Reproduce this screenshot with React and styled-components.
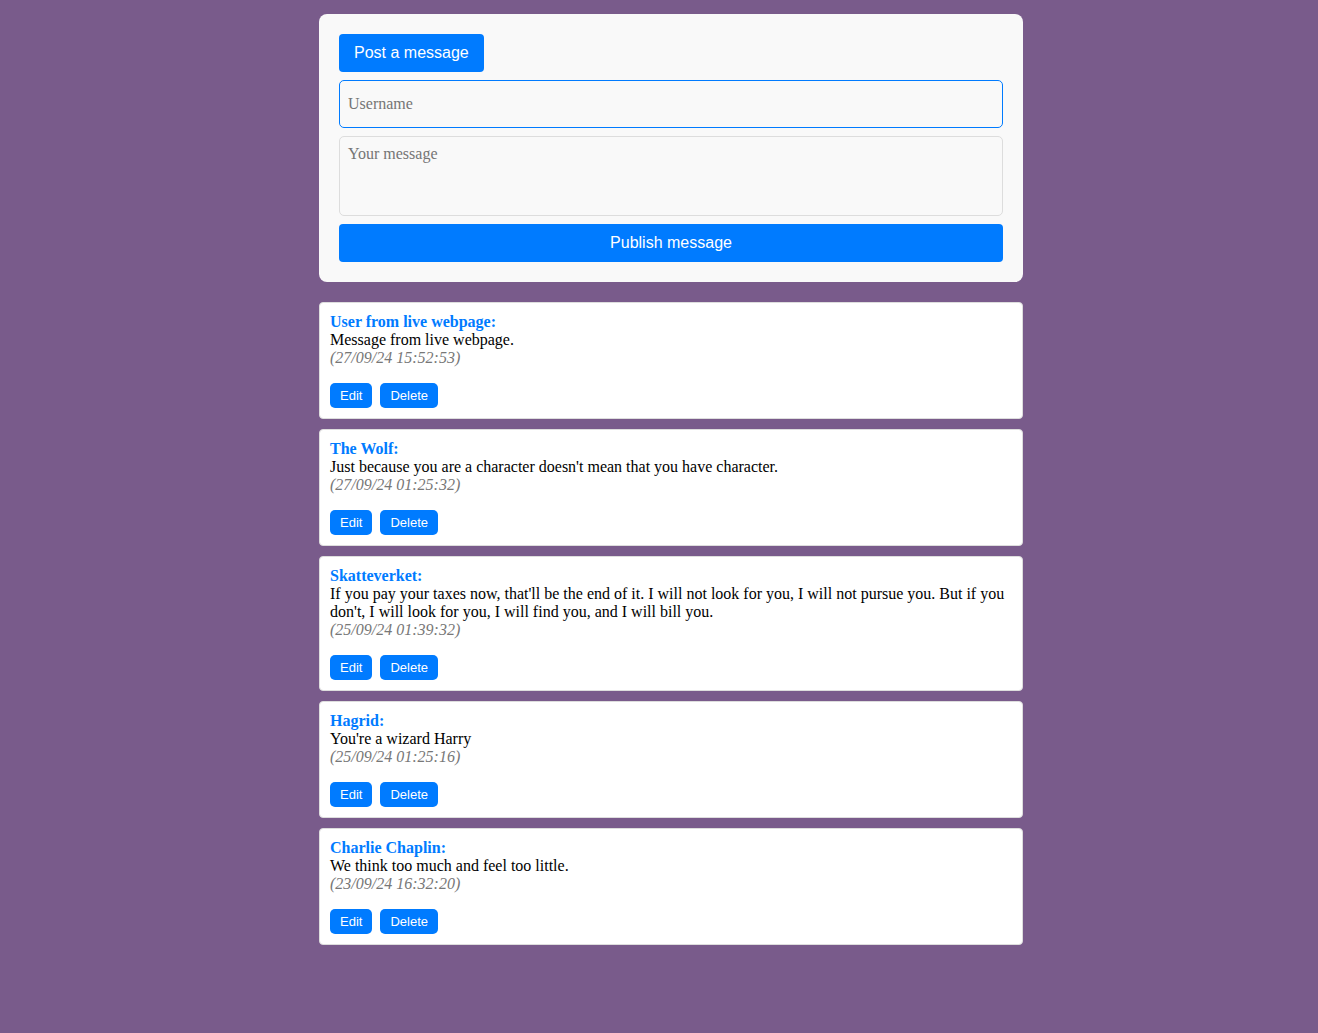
import React from "react";
import styled, { createGlobalStyle } from "styled-components";

const GlobalStyle = createGlobalStyle`
   * { box-sizing: border-box; }
   html, body {
      margin: 0;
      background: #795b8b;
      font-family: "Liberation Serif", "Times New Roman", serif;
      font-size: 16px;
   }
`;

const Page = styled.div`
   min-height: 100vh;
   padding: 14px 0 40px 24px;
`;

const Column = styled.div`
   width: 704px;
   margin: 0 auto;
   display: flex;
   flex-direction: column;
   gap: 10px;
`;

const FormCard = styled.form`
   background: #f9f9f9;
   border-radius: 8px;
   padding: 20px;
   display: flex;
   flex-direction: column;
   align-items: flex-start;
   gap: 8px;
   margin-bottom: 10px;
`;

const BlueButton = styled.button`
   background: #007bff;
   color: #fff;
   border: none;
   border-radius: ${props => (props.small ? "5px" : "4px")};
   font-family: "Liberation Sans", Arial, sans-serif;
   font-size: ${props => (props.small ? "13px" : "16px")};
   line-height: ${props => (props.small ? "15px" : "18px")};
   padding: ${props => (props.small ? "5px 10px" : "10px 15px")};
   width: ${props => (props.full ? "100%" : "auto")};
   cursor: pointer;
`;

const Field = styled.input`
   width: 100%;
   height: 48px;
   padding: 0 8px;
   border: 1px solid ${props => (props.focused ? "#007bff" : "#ddd")};
   border-radius: 5px;
   background: #f9f9f9;
   font-family: inherit;
   font-size: 16px;
   outline: none;
   &::placeholder { color: #757575; }
`;

const Area = styled.textarea`
   width: 100%;
   height: 80px;
   padding: 8px;
   border: 1px solid #ddd;
   border-radius: 5px;
   background: #f9f9f9;
   font-family: inherit;
   font-size: 16px;
   resize: none;
   outline: none;
   &::placeholder { color: #757575; }
`;

const MessageCard = styled.div`
   background: #fff;
   border: 1px solid #ddd;
   border-radius: 4px;
   padding: 10px;
   line-height: 18px;
`;

const Author = styled.div`
   color: #007bff;
   font-weight: bold;
`;

const Text = styled.div`
   color: #000;
`;

const Stamp = styled.div`
   color: #777;
   font-style: italic;
`;

const Actions = styled.div`
   display: flex;
   gap: 8px;
   margin-top: 16px;
`;

const messages = [
   { name: "User from live webpage", text: "Message from live webpage.", time: "27/09/24 15:52:53" },
   { name: "The Wolf", text: "Just because you are a character doesn't mean that you have character.", time: "27/09/24 01:25:32" },
   { name: "Skatteverket", text: "If you pay your taxes now, that'll be the end of it. I will not look for you, I will not pursue you. But if you don't, I will look for you, I will find you, and I will bill you.", time: "25/09/24 01:39:32" },
   { name: "Hagrid", text: "You're a wizard Harry", time: "25/09/24 01:25:16" },
   { name: "Charlie Chaplin", text: "We think too much and feel too little.", time: "23/09/24 16:32:20" },
];

const App = () => (
   <>
      <GlobalStyle />
      <Page>
         <Column>
            <FormCard onSubmit={e => e.preventDefault()}>
               <BlueButton type="button">Post a message</BlueButton>
               <Field focused placeholder="Username" />
               <Area placeholder="Your message" />
               <BlueButton full type="submit">Publish message</BlueButton>
            </FormCard>
            {messages.map(m => (
               <MessageCard key={m.time}>
                  <Author>{m.name}:</Author>
                  <Text>{m.text}</Text>
                  <Stamp>({m.time})</Stamp>
                  <Actions>
                     <BlueButton small>Edit</BlueButton>
                     <BlueButton small>Delete</BlueButton>
                  </Actions>
               </MessageCard>
            ))}
         </Column>
      </Page>
   </>
);

export default App;
